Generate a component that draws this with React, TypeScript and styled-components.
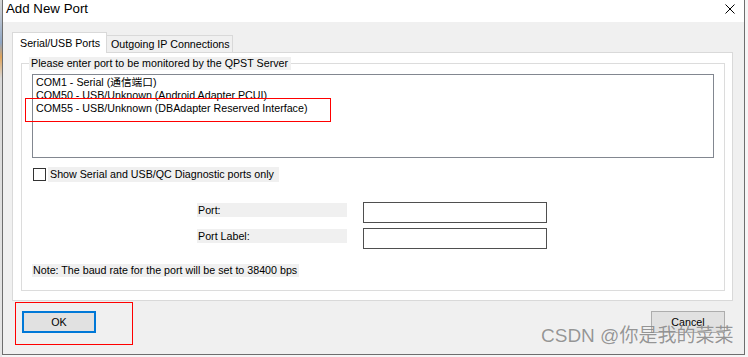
import React from 'react'
import styled, { createGlobalStyle } from 'styled-components'

const GlobalStyle = createGlobalStyle`
  html, body {
    margin: 0;
    padding: 0;
    background: #f4f4f4;
  }
  body {
    font-family: "Liberation Sans", Arial, "Noto Sans CJK SC", sans-serif;
    color: #000;
  }
`

const dialogFont = `
  font-family: "Liberation Sans", Arial, "Noto Sans CJK SC", sans-serif;
  font-size: 10.7px;
  line-height: 13px;
`

const ScreenSt = styled.div`
  display: flex;
  width: 748px;
  height: 357px;
  overflow: hidden;
  background: #f6f6f6;
`

// sliver of whatever window sits behind the dialog
const BackdropEdgeSt = styled.div`
  flex: none;
  width: 2px;
  background: linear-gradient(#d7d7d7, #8fa6c4 12%, #e0a45a 16%, #d9d9d9 22%, #e6e6e6);
`

const WindowSt = styled.div`
  position: relative;
  flex: none;
  display: flex;
  flex-direction: column;
  width: 741px;
  height: 354px;
  border: 1px solid #6e6e6e;
  border-top: none;
  background: #f0f0f0;
`

const TitleBarSt = styled.div`
  display: flex;
  justify-content: space-between;
  align-items: flex-start;
  height: 22px;
  padding: 1px 9px 0 3px;
  box-sizing: border-box;
  background: #fff;
`

const TitleSt = styled.div`
  font-family: "Liberation Sans", Arial, sans-serif;
  font-size: 13.3px;
  line-height: 16px;
`

const CloseSt = styled.div`
  width: 10px;
  height: 10px;
  margin-top: 3px;
  svg { display: block; }
`

const BodySt = styled.div`
  flex: 1;
  display: flex;
  flex-direction: column;
  padding: 10px 11px 0 9px;
`

const TabStripSt = styled.div`
  display: flex;
  align-items: flex-end;
  height: 21px;
  margin-bottom: -1px;
  position: relative;
  z-index: 1;
`

const TabSt = styled.div<{ $active?: boolean; $width: number }>`
  ${dialogFont}
  box-sizing: border-box;
  width: ${({ $width }) => $width}px;
  height: ${({ $active }) => ($active ? 21 : 17)}px;
  margin-bottom: ${({ $active }) => ($active ? 0 : 1)}px;
  padding: ${({ $active }) => ($active ? '4px 0 0 7px' : '2px 0 0 4px')};
  border: 1px solid #d9d9d9;
  border-bottom: none;
  ${({ $active }) => (!$active ? 'border-left: none;' : '')}
  background: ${({ $active }) => ($active ? '#fff' : '#f0f0f0')};
  white-space: nowrap;
`

const PanelSt = styled.div`
  box-sizing: border-box;
  height: 249px;
  padding: 4px 7px 0 8px;
  border: 1px solid #d9d9d9;
  background: #fff;
`

const GroupSt = styled.fieldset`
  margin: 0;
  padding: 0 10px 13px;
  border: 1px solid #dcdcdc;
  min-width: 0;
`

const LegendSt = styled.legend`
  ${dialogFont}
  margin-left: -3px;
  padding: 0 3px 0 2px;
  background: #f0f0f0;
`

const ListBoxSt = styled.div`
  ${dialogFont}
  position: relative;
  box-sizing: border-box;
  height: 84px;
  margin-top: 4px;
  padding: 1px 3px;
  border: 1px solid #828790;
  background: #fff;
`

const ListItemSt = styled.div`
  white-space: nowrap;
`

const MarkSt = styled.div<{ $left: number; $top: number; $width: number; $height: number }>`
  position: absolute;
  left: ${({ $left }) => $left}px;
  top: ${({ $top }) => $top}px;
  width: ${({ $width }) => $width}px;
  height: ${({ $height }) => $height}px;
  box-sizing: border-box;
  border: 1px solid #ff0000;
  pointer-events: none;
`

const CheckRowSt = styled.label`
  display: flex;
  align-items: center;
  height: 15px;
  margin-top: 9px;
`

const CheckBoxSt = styled.span`
  box-sizing: border-box;
  width: 13px;
  height: 13px;
  margin-left: 1px;
  border: 1px solid #333;
  background: #fff;
`

const CheckLabelSt = styled.span`
  ${dialogFont}
  line-height: 15px;
  margin-left: 2px;
  padding: 0 5px 0 2px;
  background: #f0f0f0;
`

const FieldGridSt = styled.div`
  display: grid;
  grid-template-columns: 150px 184px;
  column-gap: 16px;
  row-gap: 5px;
  margin-top: 20px;
  padding-left: 165px;
`

const FieldLabelSt = styled.div`
  ${dialogFont}
  align-self: start;
  height: 14px;
  margin-top: 1px;
  padding-left: 1px;
  line-height: 14px;
  background: #f0f0f0;
`

const InputSt = styled.div`
  box-sizing: border-box;
  height: 21px;
  border: 1px solid #4f4f4f;
  background: #fff;
`

const NoteSt = styled.div`
  ${dialogFont}
  width: fit-content;
  margin-top: 15px;
  padding: 0 2px 0 1px;
  background: #f0f0f0;
`

const ButtonRowSt = styled.div`
  display: flex;
  justify-content: space-between;
  margin-top: 10px;
  padding: 0 8px 0 10px;
`

const ButtonSt = styled.div<{ $default?: boolean }>`
  ${dialogFont}
  position: relative;
  box-sizing: border-box;
  display: flex;
  align-items: center;
  justify-content: center;
  width: 74px;
  height: 22px;
  border: ${({ $default }) => ($default ? '2px solid #0078d7' : '1px solid #adadad')};
  background: #e1e1e1;
`

// site watermark stamped over the screenshot
const WatermarkSt = styled.div`
  position: absolute;
  left: 538px;
  top: 325px;
  font-family: "Liberation Sans", Arial, "Noto Sans CJK SC", sans-serif;
  font-size: 19px;
  line-height: 22px;
  color: rgba(110, 110, 110, 0.72);
  text-shadow: 0 0 1px rgba(255, 255, 255, 0.7);
  white-space: nowrap;
  pointer-events: none;
`

const ports = [
  'COM1 - Serial (通信端口)',
  'COM50 - USB/Unknown (Android Adapter PCUI)',
  'COM55 - USB/Unknown (DBAdapter Reserved Interface)',
]

export default function App() {
  return (
    <ScreenSt>
      <GlobalStyle />
      <BackdropEdgeSt />
      <WindowSt>
        <TitleBarSt>
          <TitleSt>Add New Port</TitleSt>
          <CloseSt>
            <svg width="10" height="10" viewBox="0 0 10 10">
              <path d="M0.5 0.5 L9.5 9.5 M9.5 0.5 L0.5 9.5" stroke="#000" strokeWidth="1" />
            </svg>
          </CloseSt>
        </TitleBarSt>

        <BodySt>
          <TabStripSt>
            <TabSt $active $width={95}>Serial/USB Ports</TabSt>
            <TabSt $width={126}>Outgoing IP Connections</TabSt>
          </TabStripSt>

          <PanelSt>
            <GroupSt>
              <LegendSt>Please enter port to be monitored by the QPST Server</LegendSt>
              <ListBoxSt>
                {ports.map(p => (
                  <ListItemSt key={p}>{p}</ListItemSt>
                ))}
                <MarkSt $left={-8} $top={23} $width={306} $height={24} />
              </ListBoxSt>

              <CheckRowSt>
                <CheckBoxSt />
                <CheckLabelSt>Show Serial and USB/QC Diagnostic ports only</CheckLabelSt>
              </CheckRowSt>

              <FieldGridSt>
                <FieldLabelSt>Port:</FieldLabelSt>
                <InputSt />
                <FieldLabelSt>Port Label:</FieldLabelSt>
                <InputSt />
              </FieldGridSt>

              <NoteSt>Note: The baud rate for the port will be set to 38400 bps</NoteSt>
            </GroupSt>
          </PanelSt>

          <ButtonRowSt>
            <ButtonSt $default>
              OK
              <MarkSt $left={-9} $top={-11} $width={118} $height={43} />
            </ButtonSt>
            <ButtonSt>Cancel</ButtonSt>
          </ButtonRowSt>
        </BodySt>

        <WatermarkSt>CSDN @你是我的菜菜</WatermarkSt>
      </WindowSt>
    </ScreenSt>
  )
}
